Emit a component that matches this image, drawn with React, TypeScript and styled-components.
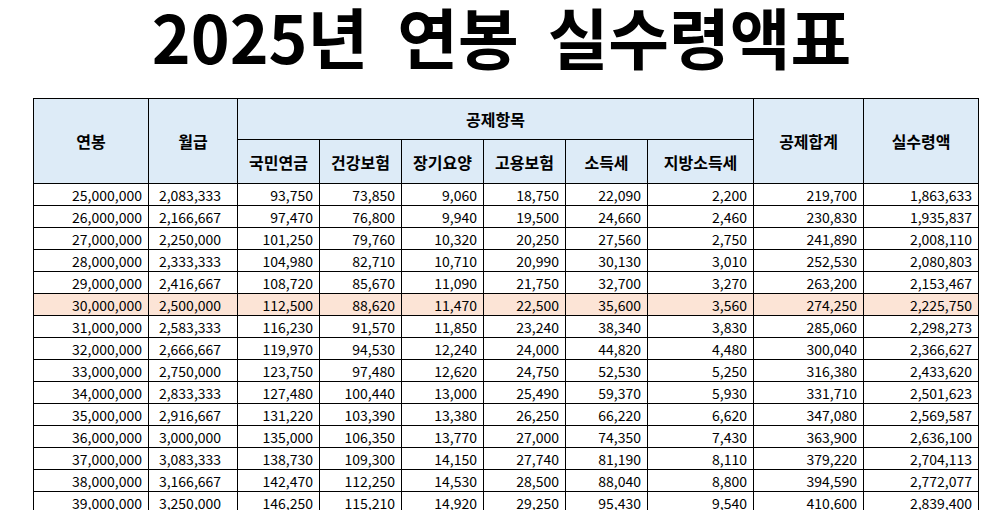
import styled, { createGlobalStyle } from "styled-components";

const GlobalStyle = createGlobalStyle`
    html, body {
        margin: 0;
        padding: 0;
        background: #ffffff;
        font-family: "Noto Sans CJK KR", "Noto Sans", sans-serif;
        color: #000000;
    }
`;

const Page = styled.div`
    width: 1003px;
    display: flex;
    flex-direction: column;
    align-items: flex-start;
`;

const Title = styled.h1`
    flex-shrink: 0;
    align-self: stretch;
    margin: 0;
    height: 98px;
    padding-top: 1px;
    box-sizing: border-box;
    text-align: center;
    font-size: 66px;
    line-height: 68px;
    font-weight: 700;
    letter-spacing: 0;
    word-spacing: 14px;
    white-space: nowrap;
`;

const Table = styled.table`
    flex-shrink: 0;
    margin-left: 33px;
    width: 945px;
    table-layout: fixed;
    border-collapse: collapse;
    font-size: 14px;
`;

const HeadRow = styled.tr<{ $h: number }>`
    height: ${(p) => p.$h}px;
`;

const Th = styled.th`
    padding: 0;
    border: 1px solid #000000;
    background: #ddebf7;
    font-size: 16px;
    font-weight: 700;
    text-align: center;
    vertical-align: middle;
`;

const Tr = styled.tr<{ $hl?: boolean }>`
    height: 22px;
    background: ${(p) => (p.$hl ? "#fce4d6" : "#ffffff")};
`;

const Td = styled.td<{ $center?: boolean }>`
    padding: 1px 6px 0 0;
    border: 1px solid #000000;
    text-align: ${(p) => (p.$center ? "center" : "right")};
    vertical-align: middle;
    line-height: 19px;
    white-space: nowrap;
`;

const widths = [115, 89, 82, 82, 82, 82, 82, 106, 110, 115];

const rows: string[][] = [
    ["25,000,000", "2,083,333", "93,750", "73,850", "9,060", "18,750", "22,090", "2,200", "219,700", "1,863,633"],
    ["26,000,000", "2,166,667", "97,470", "76,800", "9,940", "19,500", "24,660", "2,460", "230,830", "1,935,837"],
    ["27,000,000", "2,250,000", "101,250", "79,760", "10,320", "20,250", "27,560", "2,750", "241,890", "2,008,110"],
    ["28,000,000", "2,333,333", "104,980", "82,710", "10,710", "20,990", "30,130", "3,010", "252,530", "2,080,803"],
    ["29,000,000", "2,416,667", "108,720", "85,670", "11,090", "21,750", "32,700", "3,270", "263,200", "2,153,467"],
    ["30,000,000", "2,500,000", "112,500", "88,620", "11,470", "22,500", "35,600", "3,560", "274,250", "2,225,750"],
    ["31,000,000", "2,583,333", "116,230", "91,570", "11,850", "23,240", "38,340", "3,830", "285,060", "2,298,273"],
    ["32,000,000", "2,666,667", "119,970", "94,530", "12,240", "24,000", "44,820", "4,480", "300,040", "2,366,627"],
    ["33,000,000", "2,750,000", "123,750", "97,480", "12,620", "24,750", "52,530", "5,250", "316,380", "2,433,620"],
    ["34,000,000", "2,833,333", "127,480", "100,440", "13,000", "25,490", "59,370", "5,930", "331,710", "2,501,623"],
    ["35,000,000", "2,916,667", "131,220", "103,390", "13,380", "26,250", "66,220", "6,620", "347,080", "2,569,587"],
    ["36,000,000", "3,000,000", "135,000", "106,350", "13,770", "27,000", "74,350", "7,430", "363,900", "2,636,100"],
    ["37,000,000", "3,083,333", "138,730", "109,300", "14,150", "27,740", "81,190", "8,110", "379,220", "2,704,113"],
    ["38,000,000", "3,166,667", "142,470", "112,250", "14,530", "28,500", "88,040", "8,800", "394,590", "2,772,077"],
    ["39,000,000", "3,250,000", "146,250", "115,210", "14,920", "29,250", "95,430", "9,540", "410,600", "2,839,400"],
];

const deductions = ["국민연금", "건강보험", "장기요양", "고용보험", "소득세", "지방소득세"];

export default function App() {
    return (
        <>
            <GlobalStyle />
            <Page>
                <Title>2025년 연봉 실수령액표</Title>
                <Table>
                    <colgroup>
                        {widths.map((w, i) => (
                            <col key={i} style={{ width: w }} />
                        ))}
                    </colgroup>
                    <thead>
                        <HeadRow $h={41}>
                            <Th rowSpan={2}>연봉</Th>
                            <Th rowSpan={2}>월급</Th>
                            <Th colSpan={6}>공제항목</Th>
                            <Th rowSpan={2}>공제합계</Th>
                            <Th rowSpan={2}>실수령액</Th>
                        </HeadRow>
                        <HeadRow $h={44}>
                            {deductions.map((d) => (
                                <Th key={d}>{d}</Th>
                            ))}
                        </HeadRow>
                    </thead>
                    <tbody>
                        {rows.map((r) => (
                            <Tr key={r[0]} $hl={r[0] === "30,000,000"}>
                                {r.map((v, i) => (
                                    <Td key={i} $center={i === 1}>{v}</Td>
                                ))}
                            </Tr>
                        ))}
                    </tbody>
                </Table>
            </Page>
        </>
    );
}
